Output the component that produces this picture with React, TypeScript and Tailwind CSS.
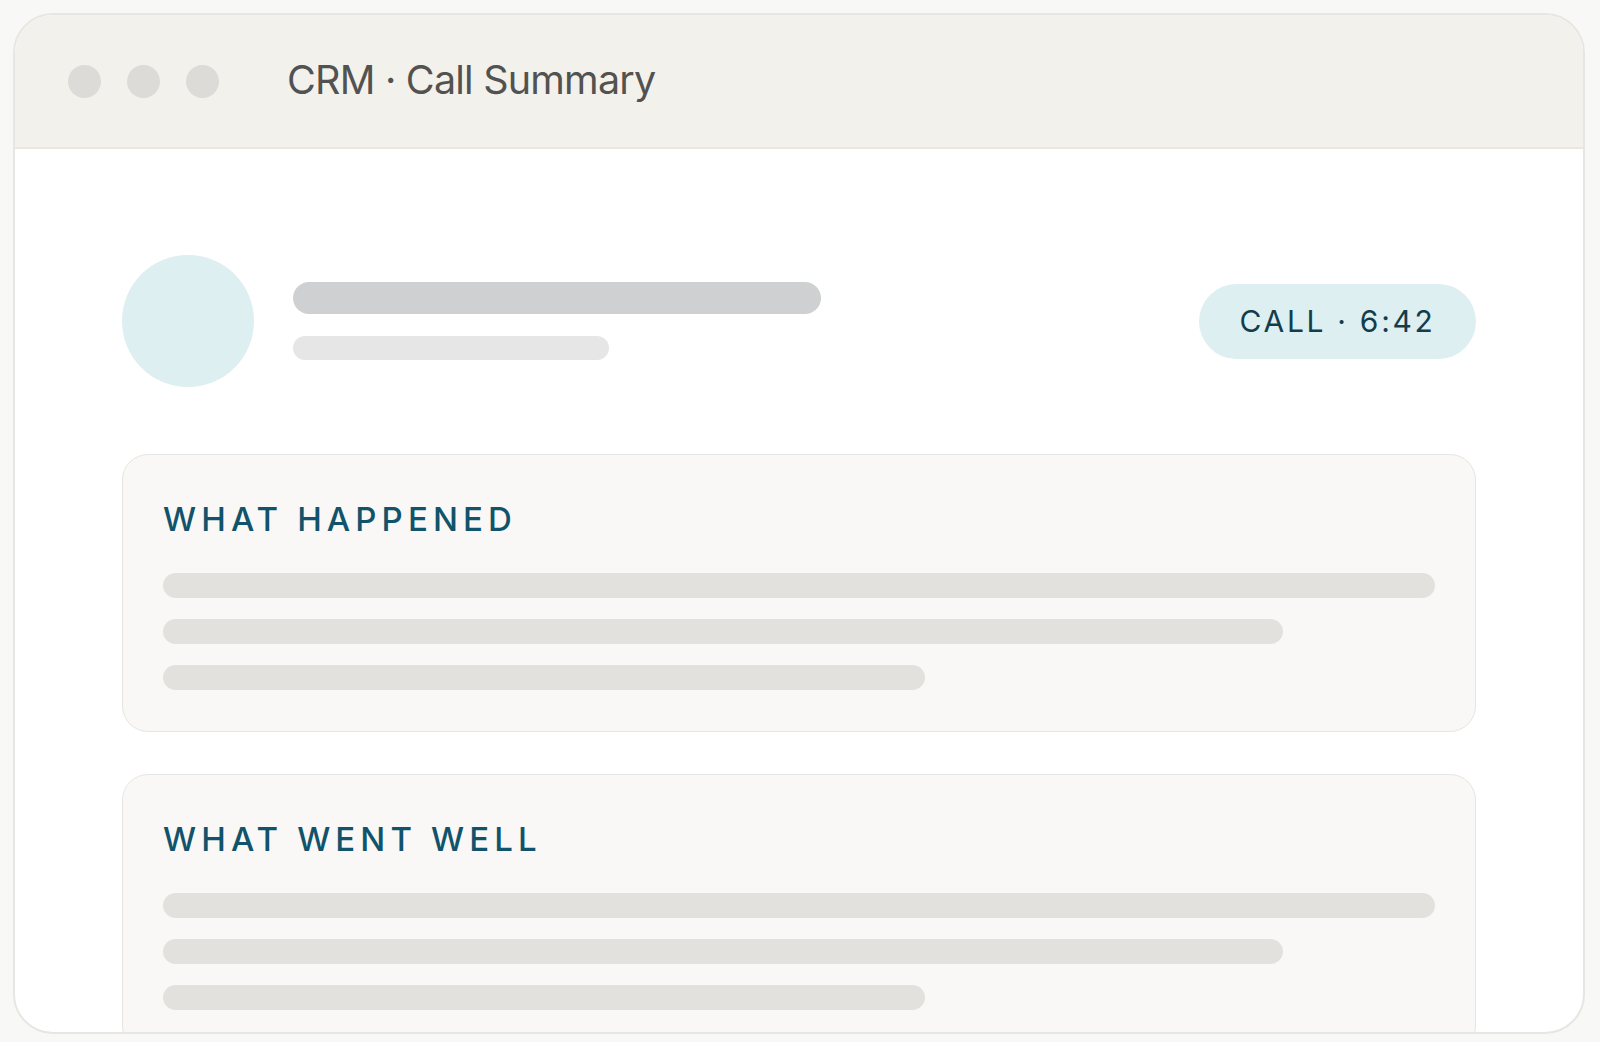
import React from 'react';

const font = { fontFamily: 'Inter, "Noto Sans", sans-serif' };

const SummaryCard: React.FC<{ title: string }> = ({ title }) => (
  <div className="rounded-[26px] border border-[#e7e5e1] bg-[#f9f8f6] px-[40px] pt-[48px] pb-[41px]">
    <h3 className="text-[33px] leading-none font-medium tracking-[0.155em] text-[#11536b]">{title}</h3>
    <div className="mt-[37px] flex flex-col gap-[21px]">
      <div className="h-[25px] w-full rounded-full bg-[#e2e1de]" />
      <div className="h-[25px] w-[1120px] rounded-full bg-[#e2e1de]" />
      <div className="h-[25px] w-[762px] rounded-full bg-[#e2e1de]" />
    </div>
  </div>
);

export default function App() {
  return (
    <div className="w-[1600px] h-[1042px] bg-[#f8f8f6] pl-[13px] pt-[13px]" style={font}>
      <div className="w-[1572px] h-[1021px] rounded-[40px] border-2 border-[#e8e6e2] bg-white overflow-hidden flex flex-col">
        {/* Title bar */}
        <div className="h-[134px] shrink-0 flex items-center bg-[#f3f1ec] border-b-2 border-[#e9e7e2] pl-[53px]">
          <div className="flex gap-[26px]">
            <span className="h-[33px] w-[33px] rounded-full bg-[#dddbd7]" />
            <span className="h-[33px] w-[33px] rounded-full bg-[#dddbd7]" />
            <span className="h-[33px] w-[33px] rounded-full bg-[#dddbd7]" />
          </div>
          <span className="ml-[68px] text-[39.5px] leading-none tracking-[-0.02em] text-[#525250]">CRM · Call Summary</span>
        </div>

        {/* Body */}
        <div className="px-[107px] pt-[106px]">
          <div className="flex items-center">
            <div className="h-[132px] w-[132px] rounded-full bg-[#ddeff0]" />
            <div className="ml-[39px] flex flex-col gap-[22px]">
              <div className="h-[32px] w-[528px] rounded-full bg-[#cfd0d1]" />
              <div className="h-[24px] w-[316px] rounded-full bg-[#e6e6e6]" />
            </div>
            <div className="ml-auto h-[75px] w-[277px] rounded-full bg-[#ddeff1] flex items-center justify-center">
              <span className="text-[30px] leading-none tracking-[0.09em] text-[#123d4c]">CALL · 6:42</span>
            </div>
          </div>

          <div className="mt-[67px] flex flex-col gap-[42px]">
            <SummaryCard title="WHAT HAPPENED" />
            <SummaryCard title="WHAT WENT WELL" />
          </div>
        </div>
      </div>
    </div>
  );
}
